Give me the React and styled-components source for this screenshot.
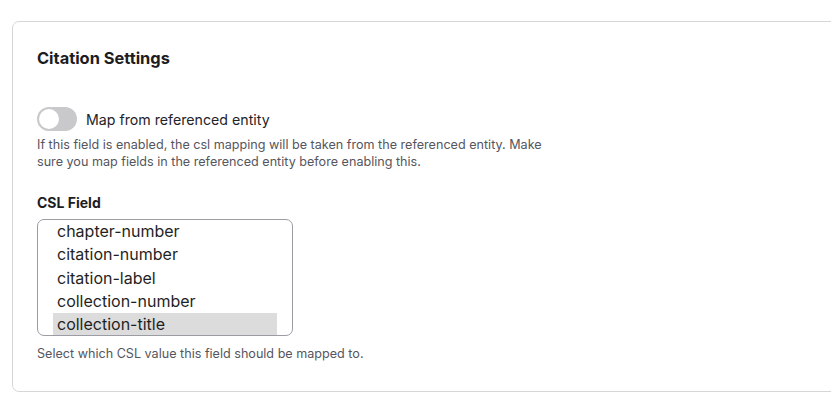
import React from 'react';
import styled, { createGlobalStyle } from 'styled-components';

const GlobalStyle = createGlobalStyle`
	body {
		margin: 0;
		background: #ffffff;
		font-family: Inter, 'Liberation Sans', sans-serif;
		color: #1f1f24;
		overflow: hidden;
	}
`;

const Card = styled.section`
	margin: 21px 0 0 12px;
	width: 840px;
	height: 371px;
	box-sizing: border-box;
	border: 1px solid #d6d6d8;
	border-radius: 7px;
	padding: 25px 24px 0 24px;
`;

const Title = styled.h2`
	margin: 0;
	font-size: 16.4px;
	font-weight: 700;
	line-height: 22px;
	color: #1c1c22;
`;

const ToggleRow = styled.label`
	display: flex;
	align-items: center;
	gap: 9px;
	margin-top: 38px;
`;

const Track = styled.span`
	position: relative;
	width: 40px;
	height: 24px;
	border-radius: 12px;
	background: ${(p) => (p.on ? '#2a6ebb' : '#c9c9cb')};
	flex-shrink: 0;
`;

const Knob = styled.span`
	position: absolute;
	top: 2px;
	left: ${(p) => (p.on ? '18px' : '2px')};
	width: 20px;
	height: 20px;
	border-radius: 50%;
	background: #ffffff;
`;

const ToggleLabel = styled.span`
	font-size: 14.2px;
	color: #232328;
`;

const Help = styled.p`
	margin: ${(p) => p.mt || '0'} 0 0 0;
	font-size: 12.6px;
	line-height: 17px;
	color: #55565e;
	max-width: 512px;
`;

const FieldLabel = styled.div`
	margin-top: 24px;
	font-size: 14px;
	font-weight: 700;
	color: #1c1c22;
	line-height: 18px;
`;

const ListBox = styled.div`
	margin-top: 7px;
	width: 256px;
	height: 117px;
	box-sizing: border-box;
	border: 1px solid #9c9ca4;
	border-radius: 7px;
	overflow: hidden;
	padding: 0 15px;
`;

const Option = styled.div`
	font-size: 16px;
	line-height: 23.3px;
	padding-left: 4px;
	color: #1f1f24;
	background: ${(p) => (p.selected ? '#dcdcdc' : 'transparent')};
`;

const options = [
	'chapter-number',
	'citation-number',
	'citation-label',
	'collection-number',
	'collection-title',
];

export default function App() {
	const selected = 'collection-title';

	return (
		<>
			<GlobalStyle />
			<Card>
				<Title>Citation Settings</Title>
				<ToggleRow>
					<Track on={0}>
						<Knob on={0} />
					</Track>
					<ToggleLabel>Map from referenced entity</ToggleLabel>
				</ToggleRow>
				<Help mt="5px">
					If this field is enabled, the csl mapping will be taken from the
					referenced entity. Make sure you map fields in the referenced entity
					before enabling this.
				</Help>
				<FieldLabel>CSL Field</FieldLabel>
				<ListBox>
					{options.map((o) => (
						<Option key={o} selected={o === selected}>
							{o}
						</Option>
					))}
				</ListBox>
				<Help mt="9px">Select which CSL value this field should be mapped to.</Help>
			</Card>
		</>
	);
}
